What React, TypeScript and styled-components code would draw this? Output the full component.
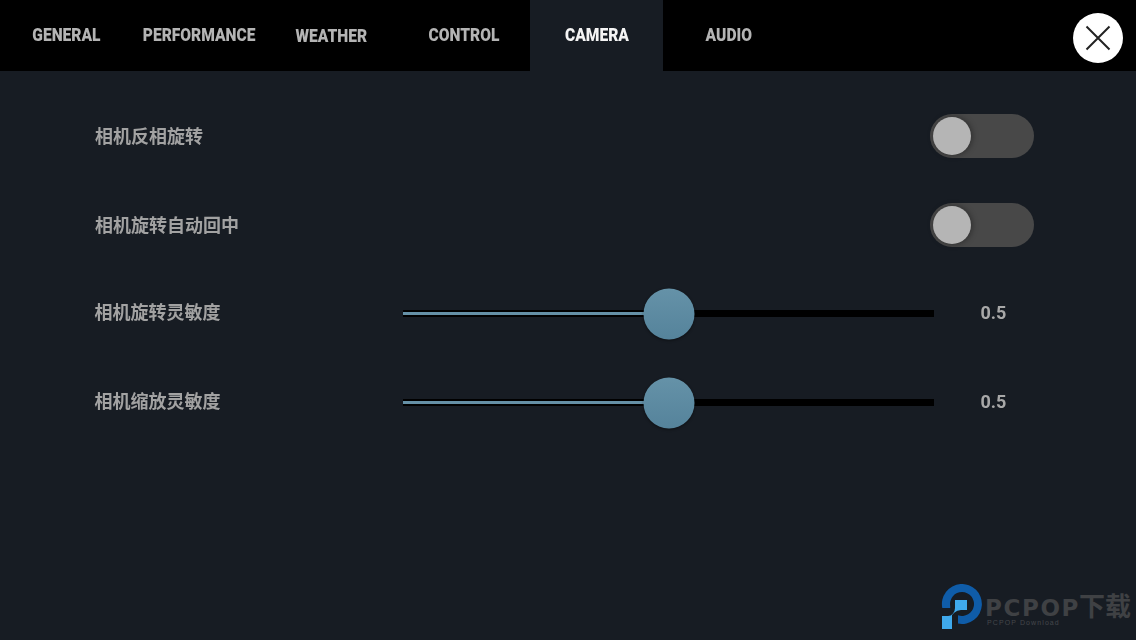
import React from "react";
import styled, { createGlobalStyle } from "styled-components";

const Global = createGlobalStyle`
  html, body { margin: 0; padding: 0; background: #171c23; }
  #root { width: 1136px; height: 640px; overflow: hidden; }
`;

const Screen = styled.div`
  position: relative;
  width: 1136px;
  height: 640px;
  background: #171c23;
  display: flex;
  flex-direction: column;
  overflow: hidden;
`;

const Header = styled.header`
  height: 71px;
  flex: none;
  background: #000;
  display: flex;
  align-items: stretch;
  justify-content: space-between;
  padding-right: 13px;
`;

const Tabs = styled.nav`
  display: flex;
`;

const Tab = styled.div<{ $active?: boolean; $shift?: number }>`
  width: 132.6px;
  display: flex;
  align-items: center;
  justify-content: center;
  padding-top: ${(p) => p.$shift ?? 0}px;
  box-sizing: border-box;
  background: ${(p) => (p.$active ? "#171c23" : "#000")};
  color: ${(p) => (p.$active ? "#f4f4f4" : "#b4b4b4")};
  font: 900 18px Roboto, "Liberation Sans", sans-serif;
`;

const TabLabel = styled.span`
  display: inline-block;
  transform: scaleX(0.865);
  white-space: nowrap;
  margin-bottom: 2px;
  filter: blur(0.35px);
`;

const Close = styled.button`
  align-self: flex-start;
  margin-top: 13px;
  width: 50px;
  height: 50px;
  border: 0;
  padding: 0;
  border-radius: 50%;
  background: #fff;
  display: flex;
  align-items: center;
  justify-content: center;
`;

const Rows = styled.main`
  padding: 20px 102px 0 95px;
  display: flex;
  flex-direction: column;
`;

const Row = styled.div`
  height: 89px;
  display: flex;
  align-items: center;
`;

const Label = styled.div<{ $slider?: boolean }>`
  flex: none;
  width: ${(p) => (p.$slider ? 308 : 300)}px;
  margin-left: ${(p) => (p.$slider ? -0.5 : 0)}px;
  margin-bottom: ${(p) => (p.$slider ? 6 : 2)}px;
  color: #a2a2a2;
  font: 700 18px "Noto Sans CJK SC", "Noto Sans", sans-serif;
  filter: blur(0.3px);
`;

const Toggle = styled.div`
  margin-left: auto;
  width: 104px;
  height: 44px;
  border-radius: 22px;
  background: #484848;
  display: flex;
  align-items: center;
  padding-left: 3px;
  box-sizing: border-box;
`;

const ToggleKnob = styled.div`
  width: 38px;
  height: 38px;
  margin-top: 1px;
  border-radius: 50%;
  background: #b5b5b5;
  box-shadow: 1px 0 6px rgba(0, 0, 0, 0.4);
`;

const Track = styled.div`
  position: relative;
  flex: none;
  width: 531px;
  height: 7px;
  background: #000;
  display: flex;
  align-items: center;
`;

const Fill = styled.div`
  height: 3px;
  background: #6590a6;
`;

const Thumb = styled.div`
  position: absolute;
  top: 50%;
  width: 51px;
  height: 51px;
  border-radius: 50%;
  transform: translate(-50%, -50%);
  background: linear-gradient(#6592a8, #55839b);
  box-shadow: 0 1px 3px rgba(0, 0, 0, 0.45);
`;

const Value = styled.div`
  flex: 1;
  padding: 0 0 2px 47px;
  box-sizing: border-box;
  color: #a8a8a8;
  font: 700 18px Roboto, sans-serif;
  filter: blur(0.3px);
`;

const Watermark = styled.div`
  position: absolute;
  left: 941px;
  top: 584px;
  display: flex;
  gap: 2px;
`;

const MarkText = styled.div`
  padding-top: 13px;
  display: flex;
  flex-direction: column;
  white-space: nowrap;
`;

const MarkTitle = styled.div`
  height: 21px;
  color: #3f4144;
  font: 700 23px/21px "DejaVu Sans", "Noto Sans CJK SC", sans-serif;
  letter-spacing: 1.6px;
`;

const MarkCjk = styled.span`
  font-size: 26px;
  letter-spacing: 0;
  margin-left: -1px;
`;

const MarkSub = styled.div`
  color: #45474b;
  font: 400 7px/8px "Liberation Sans", sans-serif;
  letter-spacing: 1.1px;
  padding: 1px 0 0 2px;
`;

const rows = [
  { label: "相机反相旋转", kind: "toggle" },
  { label: "相机旋转自动回中", kind: "toggle" },
  { label: "相机旋转灵敏度", kind: "slider", value: 0.5 },
  { label: "相机缩放灵敏度", kind: "slider", value: 0.5 },
];

const tabs = ["GENERAL", "PERFORMANCE", "WEATHER", "CONTROL", "CAMERA", "AUDIO"];

export default function App() {
  return (
    <Screen>
      <Global />
      <Header>
        <Tabs>
          {tabs.map((t) => (
            <Tab key={t} $active={t === "CAMERA"} $shift={t === "WEATHER" ? 2 : 0}>
              <TabLabel>{t}</TabLabel>
            </Tab>
          ))}
        </Tabs>
        <Close aria-label="close">
          <svg width="26" height="26" viewBox="0 0 26 26">
            <path d="M1.5 1.5L24.5 24.5M24.5 1.5L1.5 24.5" stroke="#222" strokeWidth="2" fill="none" />
          </svg>
        </Close>
      </Header>
      <Rows>
        {rows.map((r) =>
          r.kind === "toggle" ? (
            <Row key={r.label}>
              <Label>{r.label}</Label>
              <Toggle>
                <ToggleKnob />
              </Toggle>
            </Row>
          ) : (
            <Row key={r.label}>
              <Label $slider>{r.label}</Label>
              <Track>
                <Fill style={{ width: `${(r.value as number) * 100}%` }} />
                <Thumb style={{ left: `${(r.value as number) * 100 + 0.1}%` }} />
              </Track>
              <Value>{r.value}</Value>
            </Row>
          )
        )}
      </Rows>
      <Watermark>
        <svg width="42" height="46" viewBox="0 0 42 46">
          <path d="M1.3 24 A20 20 0 1 1 17 39.6 L17 31.3 A12 12 0 1 0 9.2 22 L9.2 24 Z" fill="#0f5ca8" />
          <path d="M14 16 H26 V26 H20 Q16 26 13.5 28.5 L11 31 V45 H1 V32 H7 Q10 32 12 29.5 Q14 27 14 24 Z" fill="#3fa9ec" />
        </svg>
        <MarkText>
          <MarkTitle>
            PCPOP<MarkCjk>下载</MarkCjk>
          </MarkTitle>
          <MarkSub>PCPOP Download</MarkSub>
        </MarkText>
      </Watermark>
    </Screen>
  );
}
